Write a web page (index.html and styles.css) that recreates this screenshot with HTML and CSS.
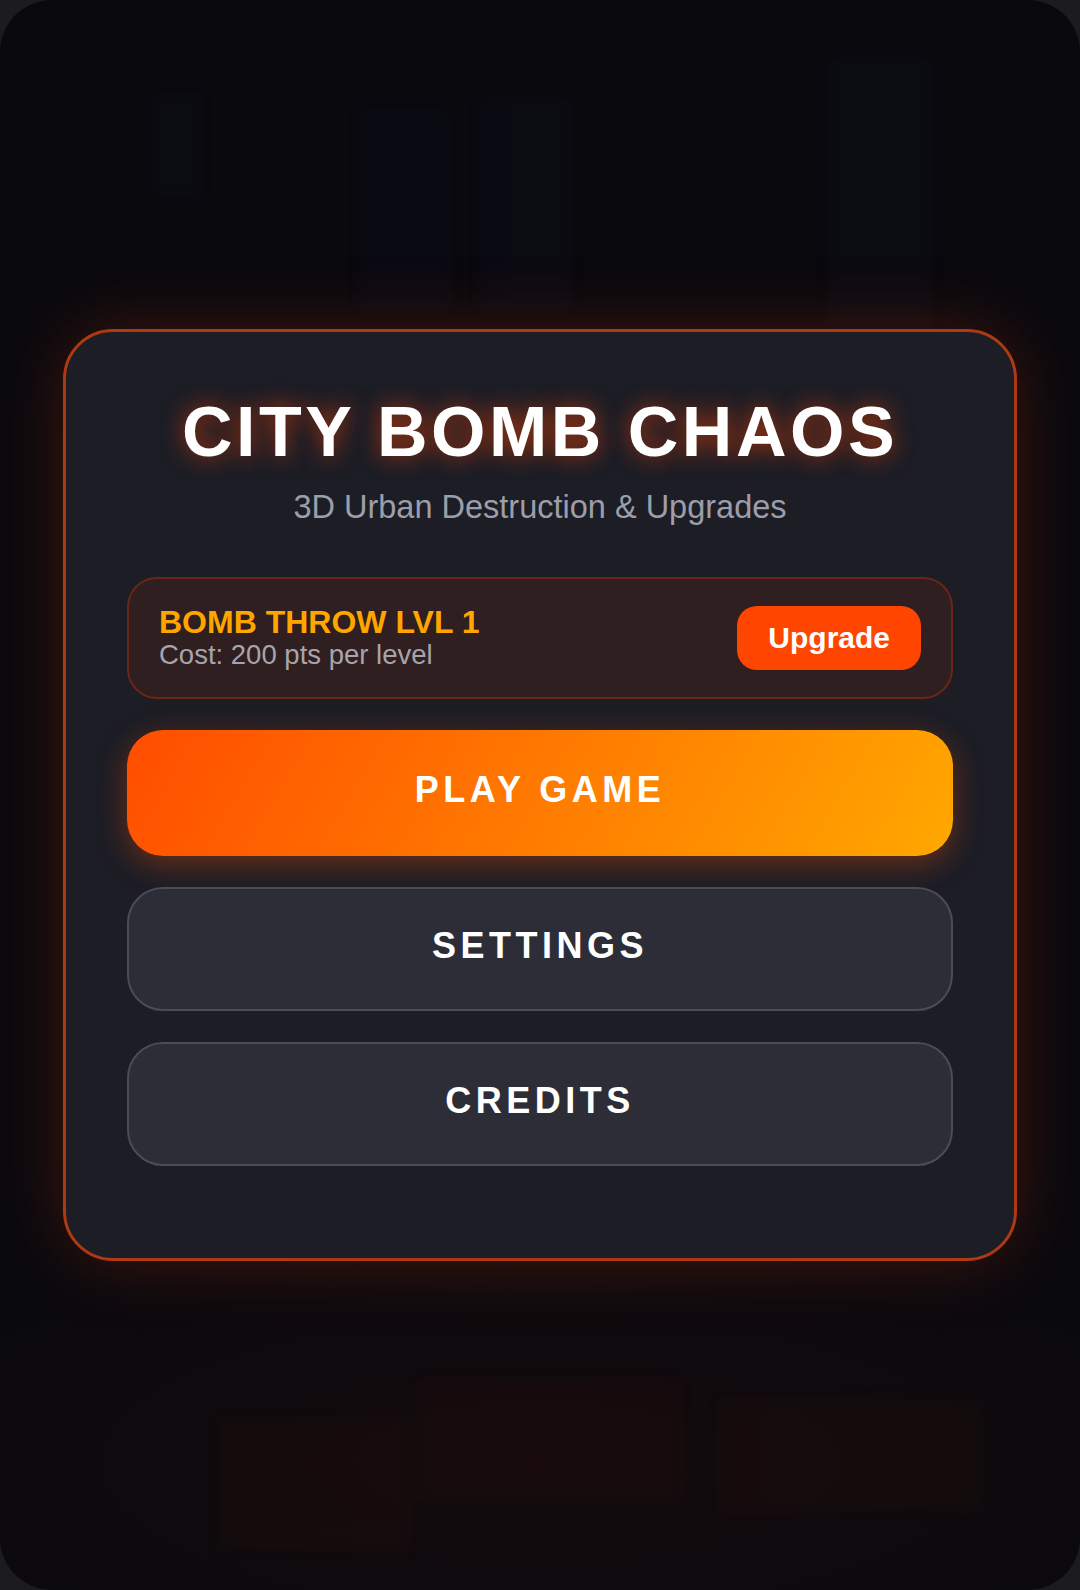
FILE: index.html
```html
<!DOCTYPE html>
<html>
	<head>
		<meta charset="utf-8">
		<title>City Bomb Chaos</title>
		<link rel="stylesheet" href="styles.css">
	</head>
	<body>
		<div class="screen">
			<!-- dim city skyline behind the menu -->
			<svg class="skyline" width="1080" height="1590" viewBox="0 0 1080 1590">
				<g fill="#16182c" opacity="0.16">
					<rect x="155" y="95" width="45" height="100"/>
					<rect x="360" y="110" width="90" height="200"/>
					<rect x="480" y="100" width="90" height="210"/>
					<rect x="830" y="60" width="100" height="330"/>
				</g>
				<g fill="#3a1208" opacity="0.14">
					<rect x="220" y="1420" width="190" height="130"/>
					<rect x="420" y="1380" width="260" height="120"/>
					<rect x="720" y="1400" width="260" height="110"/>
				</g>
			</svg>

			<div class="menu">
				<h1 class="title">CITY BOMB CHAOS</h1>
				<div class="subtitle">3D Urban Destruction &amp; Upgrades</div>

				<div class="upgrade">
					<div class="upgrade-info">
						<div class="upgrade-name">BOMB THROW LVL 1</div>
						<div class="upgrade-cost">Cost: 200 pts per level</div>
					</div>
					<button class="upgrade-btn">Upgrade</button>
				</div>

				<button class="btn btn-play">PLAY GAME</button>
				<button class="btn btn-plain">SETTINGS</button>
				<button class="btn btn-plain">CREDITS</button>
			</div>
		</div>
	</body>
</html>
```

FILE: styles.css
```css
html, body
{
	margin: 0;
	padding: 0;
	background: #1c1c1f;
}

.screen
{
	position: relative;
	height: 1590px;
	border-radius: 52px;
	overflow: hidden;
	background: radial-gradient(ellipse 70% 16% at 50% 92%, rgba(60, 20, 10, 0.22), rgba(0, 0, 0, 0)), #09090e;
	display: flex;
	align-items: center;
	justify-content: center;
	font-family: "Liberation Sans", Arial, sans-serif;
}

.skyline
{
	position: absolute;
	left: 0;
	top: 0;
	filter: blur(6px);
}

.menu
{
	position: relative;
	width: 954px;
	box-sizing: border-box;
	padding: 60px 61px 92px;
	background: #1c1d25;
	border: 3px solid #ad3a15;
	border-radius: 50px;
	box-shadow: 0 0 70px rgba(255, 69, 0, 0.22);
	display: flex;
	flex-direction: column;
	text-align: center;
}

.title
{
	margin: 0;
	font-size: 70px;
	font-weight: bold;
	letter-spacing: 3.5px;
	color: #ffffff;
	text-shadow: 0 0 22px rgba(255, 69, 0, 0.65);
}

.subtitle
{
	margin-top: 17px;
	font-size: 32.5px;
	color: #9c9ea9;
}

.upgrade
{
	margin-top: 51px;
	display: flex;
	align-items: center;
	justify-content: space-between;
	padding: 27px 30px;
	background: #2f1f21;
	border: 2px solid #6a2616;
	border-radius: 30px;
	text-align: left;
}

.upgrade-name
{
	font-size: 32px;
	font-weight: bold;
	line-height: 33px;
	color: #ffa500;
}

.upgrade-cost
{
	font-size: 27.5px;
	line-height: 31px;
	color: #a8a5aa;
}

.upgrade-btn
{
	font-family: inherit;
	font-size: 30px;
	font-weight: bold;
	color: #ffffff;
	background: #ff4500;
	border: none;
	border-radius: 20px;
	padding: 15px 31px;
}

.btn
{
	margin-top: 31px;
	font-family: inherit;
	font-size: 36px;
	font-weight: bold;
	letter-spacing: 4.5px;
	color: #ffffff;
	border-radius: 36px;
	width: 100%;
}

.btn-play
{
	padding: 39px 0 45px;
	border: none;
	background: linear-gradient(120deg, #ff4d00 0%, #ff7a00 50%, #ffa800 100%);
	box-shadow: 0 8px 30px rgba(255, 80, 0, 0.35);
}

.btn-plain
{
	padding: 36px 0 42px;
	background: #2c2d37;
	border: 2px solid #4b4c56;
}
```
